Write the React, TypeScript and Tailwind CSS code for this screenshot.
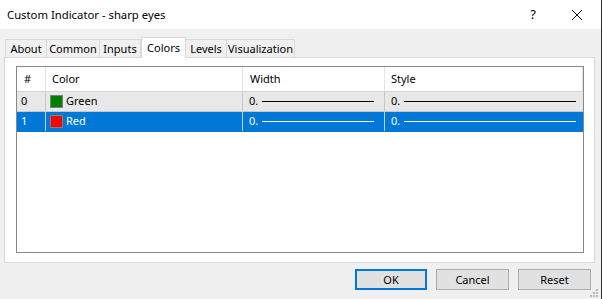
import React from "react";

const tabs = [
  { label: "About", w: 42 },
  { label: "Common", w: 53 },
  { label: "Inputs", w: 41 },
  { label: "Colors", w: 45, active: true },
  { label: "Levels", w: 41 },
  { label: "Visualization", w: 68 },
];

const rows = [
  { id: "0", name: "Green", swatch: "bg-[#008000]", selected: false },
  { id: "1", name: "Red", swatch: "bg-[#ff0000]", selected: true },
];

const LineCell = ({ selected, lineW }: { selected: boolean; lineW: string }) => (
  <div className="flex items-center gap-[5px] pl-[6px]">
    <span className="w-[8px]">0.</span>
    <span className={`h-[1px] ${lineW} ${selected ? "bg-white" : "bg-black"}`} />
  </div>
);

export default function App() {
  return (
    <div
      className="relative w-[602px] h-[299px] bg-[#f0f0f0] flex flex-col text-[11px] text-black overflow-hidden border-r border-[#2b2b2b]"
      style={{ fontFamily: '"Noto Sans", "Open Sans", sans-serif' }}
    >
      {/* Title bar */}
      <div className="h-[29px] bg-white flex items-center shrink-0">
        <span className="pl-[7px] text-[11.3px] leading-none">Custom Indicator - sharp eyes</span>
        <span className="ml-auto mr-[35px] text-[13px] leading-none">?</span>
        <svg width="12" height="12" viewBox="0 0 12 12" className="mr-[18px]">
          <path d="M1 1 L11 11 M11 1 L1 11" stroke="#111" strokeWidth="1" />
        </svg>
      </div>

      {/* Tabs */}
      <div className="px-[4px] pt-[8px]">
        <div className="flex items-end h-[20px] pl-[1px]">
          {tabs.map((t) =>
            t.active ? (
              <div
                key={t.label}
                style={{ width: t.w }}
                className="relative z-10 h-[21px] -mb-[1px] bg-white border border-b-0 border-[#d9d9d9] flex items-center justify-center leading-none pb-[2px]"
              >
                {t.label}
              </div>
            ) : (
              <div
                key={t.label}
                style={{ width: t.w }}
                className="h-[18px] bg-[#f0f0f0] border border-b-0 border-l-0 first:border-l border-[#d9d9d9] flex items-center justify-center leading-none"
              >
                {t.label}
              </div>
            )
          )}
        </div>

        {/* Panel */}
        <div className="w-[591px] h-[206px] bg-white border border-[#d9d9d9] pl-[11px] pt-[8px] pr-[10px] pb-[10px]">
          <div className="w-[568px] h-[187px] border border-[#828790] bg-white">
            <div className="grid grid-cols-[29px_197px_142px_198px] h-[25px] border-b border-[#d5d5d5]">
              <div className="flex items-center pl-[7px] border-r border-[#e5e5e5]">#</div>
              <div className="flex items-center pl-[6px] border-r border-[#e5e5e5]">Color</div>
              <div className="flex items-center pl-[7px] border-r border-[#e5e5e5]">Width</div>
              <div className="flex items-center pl-[6px] border-r border-[#e5e5e5]">Style</div>
            </div>
            {rows.map((r) => (
              <div
                key={r.id}
                className={`grid grid-cols-[29px_197px_142px_198px] h-[20px] border-b ${
                  r.selected ? "bg-[#0078d7] text-white border-[#0078d7]" : "bg-[#e8e8e8] border-[#c8c8c8]"
                }`}
              >
                <div className={`flex items-center pl-[4px] border-r ${r.selected ? "border-[#d0d0d0]" : "border-[#c8c8c8]"}`}>{r.id}</div>
                <div className={`flex items-center pl-[4px] gap-[3px] border-r ${r.selected ? "border-[#d0d0d0]" : "border-[#c8c8c8]"}`}>
                  <span className={`w-[13px] h-[13px] border border-[#808080] ${r.swatch}`} />
                  <span>{r.name}</span>
                </div>
                <div className={`border-r ${r.selected ? "border-[#d0d0d0]" : "border-[#c8c8c8]"} flex items-center`}>
                  <LineCell selected={r.selected} lineW="w-[112px]" />
                </div>
                <div className="flex items-center">
                  <LineCell selected={r.selected} lineW="w-[172px]" />
                </div>
              </div>
            ))}
          </div>
        </div>
      </div>

      {/* Buttons */}
      <div className="flex justify-end gap-[9px] pr-[10px] pt-[6px]">
        <button className="w-[72px] h-[21px] bg-[#e1e1e1] border-2 border-[#0078d7] flex items-center justify-center leading-none">OK</button>
        <button className="w-[73px] h-[21px] bg-[#e1e1e1] border border-[#adadad] flex items-center justify-center leading-none">Cancel</button>
        <button className="w-[73px] h-[21px] bg-[#e1e1e1] border border-[#adadad] flex items-center justify-center leading-none">Reset</button>
      </div>

      {/* Size grip */}
      <svg width="9" height="9" viewBox="0 0 9 9" className="absolute right-[2px] bottom-[1px]">
        {[
          [6, 0],
          [3, 3],
          [6, 3],
          [0, 6],
          [3, 6],
          [6, 6],
        ].map(([x, y], i) => (
          <rect key={i} x={x} y={y} width="2" height="2" fill="#b8b8b8" />
        ))}
      </svg>
    </div>
  );
}
